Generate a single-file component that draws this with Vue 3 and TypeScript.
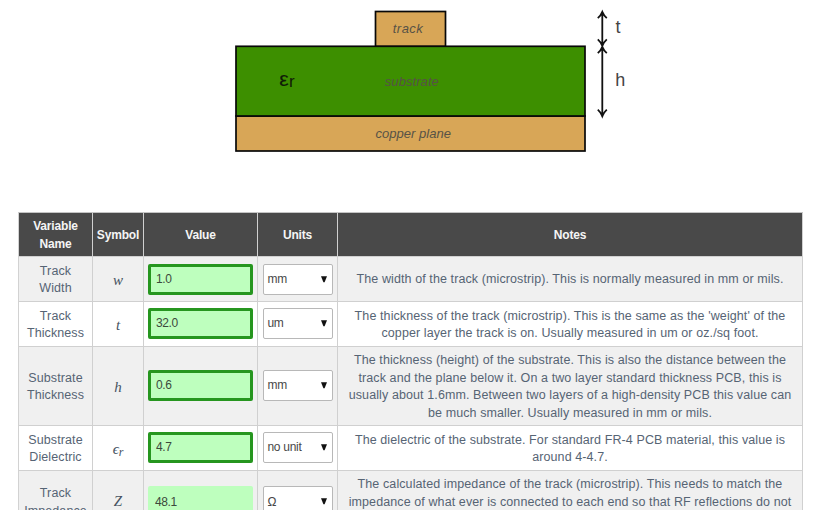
<script setup lang="ts">
import { ref } from 'vue'

interface Row {
  id: string
  name: string[]
  symbol: string
  sub?: string
  value: string
  unit: string
  notes: string[]
  output?: boolean
}

const rows = ref<Row[]>([
  {
    id: 'width', name: ['Track', 'Width'], symbol: 'w', value: '1.0', unit: 'mm',
    notes: ['The width of the track (microstrip). This is normally measured in mm or mils.'],
  },
  {
    id: 'thickness', name: ['Track', 'Thickness'], symbol: 't', value: '32.0', unit: 'um',
    notes: [
      "The thickness of the track (microstrip). This is the same as the 'weight' of the",
      'copper layer the track is on. Usually measured in um or oz./sq foot.',
    ],
  },
  {
    id: 'height', name: ['Substrate', 'Thickness'], symbol: 'h', value: '0.6', unit: 'mm',
    notes: [
      'The thickness (height) of the substrate. This is also the distance between the',
      'track and the plane below it. On a two layer standard thickness PCB, this is',
      'usually about 1.6mm. Between two layers of a high-density PCB this value can',
      'be much smaller. Usually measured in mm or mils.',
    ],
  },
  {
    id: 'dielectric', name: ['Substrate', 'Dielectric'], symbol: 'ϵ', sub: 'r', value: '4.7', unit: 'no unit',
    notes: [
      'The dielectric of the substrate. For standard FR-4 PCB material, this value is',
      'around 4-4.7.',
    ],
  },
  {
    id: 'impedance', name: ['Track', 'Impedance'], symbol: 'Z', value: '48.1', unit: 'Ω', output: true,
    notes: [
      'The calculated impedance of the track (microstrip). This needs to match the',
      'impedance of what ever is connected to each end so that RF reflections do not',
    ],
  },
])
</script>

<template>
  <main class="page">
    <svg class="diagram" width="420" height="160" viewBox="225 0 420 160">
      <g class="shape">
        <rect class="copper" x="375.5" y="11.5" width="70" height="35" />
        <rect class="copper" x="236" y="116" width="349" height="35" />
        <rect class="board" x="236" y="46.3" width="349" height="69.7" />
      </g>
      <g class="arrows">
        <path d="M602.3 12V117M597.8 18.2Q600.8 15.5 602.3 11.8Q603.8 15.5 606.8 18.2M597.8 39.4Q600.8 42.1 602.3 45.8Q603.8 42.1 606.8 39.4M597.8 53.2Q600.8 50.5 602.3 46.8Q603.8 50.5 606.8 53.2M597.8 109.6Q600.8 112.3 602.3 116.2Q603.8 112.3 606.8 109.6" />
      </g>
      <g class="label">
        <text x="392.8" y="33.2" textLength="30">track</text>
        <text x="384.8" y="86" textLength="54">substrate</text>
        <text x="375.5" y="138.3" textLength="75.5">copper plane</text>
      </g>
      <text class="epsilon" x="279.3" y="85.5">ε</text>
      <text class="epsilon-sub" x="289" y="87.3">r</text>
      <text class="dimension" x="615.5" y="33">t</text>
      <text class="dimension" x="615.2" y="85.8">h</text>
    </svg>

    <table class="calculator">
      <colgroup>
        <col class="col-name"><col class="col-symbol"><col class="col-value"><col class="col-units"><col class="col-notes">
      </colgroup>
      <thead>
        <tr>
          <th>Variable<br>Name</th>
          <th>Symbol</th>
          <th>Value</th>
          <th>Units</th>
          <th>Notes</th>
        </tr>
      </thead>
      <tbody>
        <tr v-for="row in rows" :key="row.id" :class="row.id">
          <td class="name"><span v-for="line in row.name" :key="line" class="line">{{ line }}</span></td>
          <td class="symbol">{{ row.symbol }}<sub v-if="row.sub">{{ row.sub }}</sub></td>
          <td class="value"><input v-model="row.value" :class="{ output: row.output }" :readonly="row.output"></td>
          <td class="units">
            <button type="button" class="select">
              <span>{{ row.unit }}</span>
              <svg width="6" height="7" viewBox="0 0 6 7"><path d="M0 0.3H6L3.6 6.3H2.4Z" /></svg>
            </button>
          </td>
          <td class="notes"><span v-for="line in row.notes" :key="line" class="line">{{ line }}</span></td>
        </tr>
      </tbody>
    </table>
  </main>
</template>

<style>
body {
  overflow: hidden;
  background: #fff;
}
</style>

<style scoped>
.page {
  height: 510px;
  overflow: hidden;
  font-family: "Liberation Sans", Arial, sans-serif;
}
.diagram {
  display: block;
  margin: 0 0 52px 225px;
}
.shape rect {
  stroke: #080808;
  stroke-width: 1.7;
}
.copper { fill: #d8a657; }
.board { fill: #3d8f00; }
.arrows path {
  fill: none;
  stroke: #111;
  stroke-width: 1.8;
}
.label {
  font-size: 13px;
  font-style: italic;
  fill: #575246;
}
.epsilon {
  font-size: 21px;
  fill: #101a08;
  stroke: #101a08;
  stroke-width: 0.2;
}
.epsilon-sub {
  font-size: 17px;
  fill: #101a08;
}
.dimension { font-size: 18px; fill: #444; }

.calculator {
  width: 785px;
  margin-left: 18px;
  table-layout: fixed;
  border-collapse: separate;
  border-spacing: 0;
  border-top: 1px solid #c4c4c4;
  border-left: 1px solid #d2d2d2;
  font-size: 12.5px;
  line-height: 17.5px;
  text-align: center;
  color: #566474;
}
.col-name { width: 74px; }
.col-symbol { width: 51px; }
.col-value { width: 114px; }
.col-units { width: 80px; }
th, td {
  box-sizing: border-box;
  height: 45px;
  padding: 0;
  border-right: 1px solid #d0d0d0;
  border-bottom: 1px solid #d0d0d0;
  vertical-align: middle;
}
th {
  height: 44px;
  padding-top: 2px;
  background: #494949;
  color: #f5f5f5;
  font-size: 12px;
  font-weight: bold;
  letter-spacing: -0.18px;
}
tbody tr:nth-child(odd) { background: #f0f0f0; }
.height td { height: 79px; }
.impedance td { height: 45px; }
.line {
  display: block;
  white-space: nowrap;
}
.name, .notes {
  padding-top: 2px;
  letter-spacing: 0.1px;
}
.impedance .notes { vertical-align: top; padding-top: 5px; }
.impedance .name { vertical-align: top; padding-top: 14px; }
.impedance .symbol { vertical-align: top; padding-top: 22px; }
.impedance .value, .impedance .units { vertical-align: top; padding-top: 15px; }
.symbol {
  padding-top: 3px;
  font: italic 15px/17px "Liberation Serif", serif;
  color: #465362;
}
.symbol sub {
  font-size: 12px;
  line-height: 0;
  vertical-align: -2px;
}
.value { padding-left: 4px; text-align: left; }
.thickness .value, .thickness .units,
.dielectric .value, .dielectric .units,
.height .value, .height .units { padding-bottom: 1.5px; }
input {
  display: block;
  box-sizing: border-box;
  width: 105px;
  height: 31px;
  padding: 0 0 0 5px;
  border: 3px solid #26961f;
  border-radius: 2px;
  background: #beffbe;
  color: #3c493c;
  font: 12px "Liberation Sans", Arial, sans-serif;
  letter-spacing: -0.4px;
  outline: none;
}
.value input.output {
  padding-left: 4px;
  border-color: #beffbe;
}
.units { padding-left: 4.5px; }
.select {
  display: flex;
  align-items: center;
  justify-content: space-between;
  box-sizing: border-box;
  width: 70px;
  height: 31px;
  padding: 0 5px 0 4px;
  border: 1px solid #b8b8b8;
  border-radius: 2px;
  background: #fff;
  color: #484848;
  font: 12px "Liberation Sans", Arial, sans-serif;
  letter-spacing: -0.3px;
}
.select svg { fill: #111; }
</style>
